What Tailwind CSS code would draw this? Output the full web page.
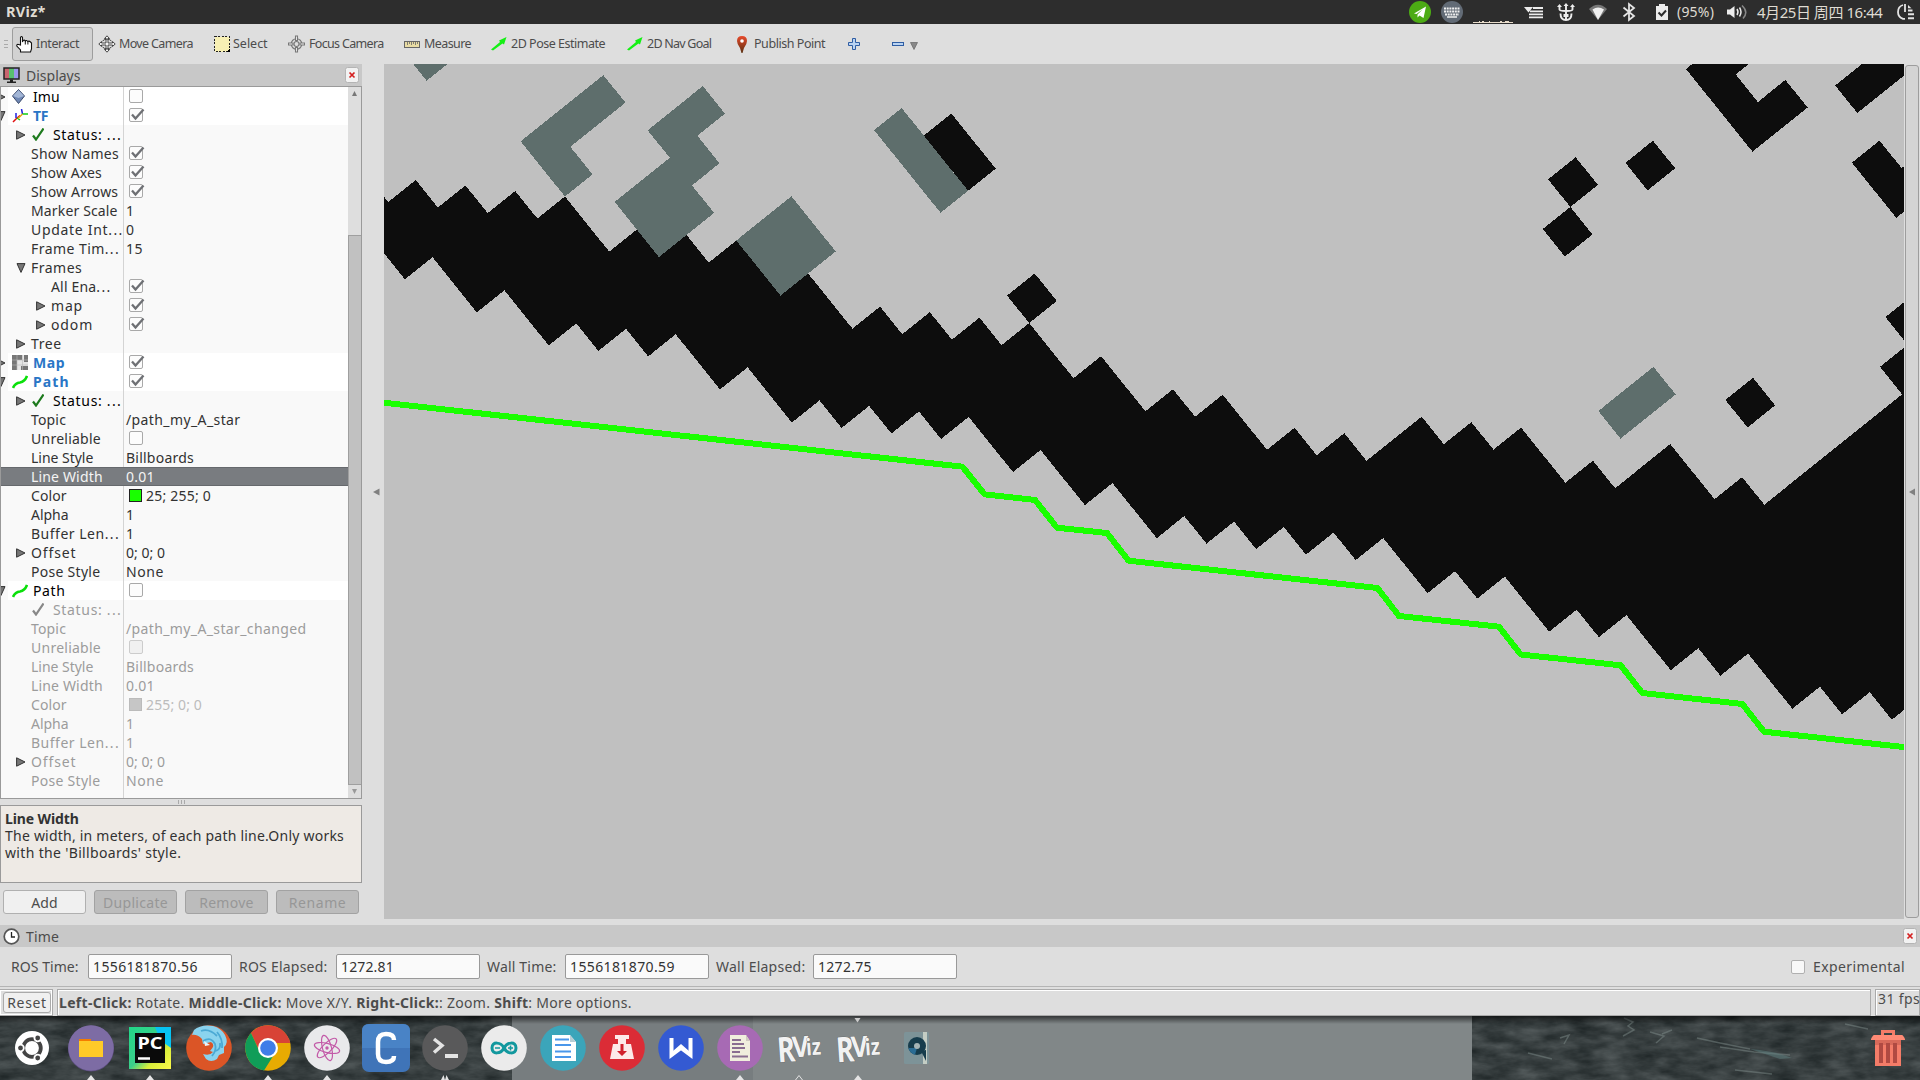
<!DOCTYPE html>
<html lang="zh">
<head>
<meta charset="utf-8">
<title>RViz*</title>
<script src="https://cdn.jsdelivr.net/npm/@tailwindcss/browser@4"></script>
</head>
<body class="w-[1920px] h-[1080px] overflow-hidden bg-[#dedede] font-['Noto_Sans','Noto_Sans_CJK_SC',sans-serif] text-[14px] text-[#4c4c4c] flex flex-col whitespace-nowrap">

<!-- top panel -->
<header class="h-6 shrink-0 bg-[#2d2d2d] text-[#dfdbd2] flex items-center pl-1.5">
  <span data-w="41" class="font-bold text-[14.5px]">RViz*</span>
  <svg class="ml-auto shrink-0" width="268" height="24" viewBox="1408 0 268 24">
    <circle cx="1420" cy="12" r="11" fill="#4cab14"/>
    <path d="M1414 13.500L1426 6.500L1423.500 18L1419.500 15.500L1417.500 17.500V14.500L1422.500 9.500L1416.500 14Z" fill="#fff"/>
    <circle cx="1452" cy="12" r="11" fill="#626b76"/>
    <path d="M1444 8.500H1460M1444 11.500H1460M1445 14.500H1459" stroke="#f0f0f0" stroke-width="2" stroke-dasharray="2 .7"/>
    <path d="M1447 17H1457" stroke="#f0f0f0" stroke-width="1.500"/>
    <path d="M1473 22.500H1513" stroke="#e8dccb"/><path d="M1479 21.500h1M1482 21.500h2M1489 21.500h1M1500 21.500h2M1505 21.500h4" stroke="#e8dccb"/>
    <path d="M1524 7H1533L1528.500 12.500Z" fill="#ececec"/>
    <path d="M1533 8H1543M1530 11.300H1543M1529 14.300H1543M1529 17.300H1543" stroke="#ececec" stroke-width="1.800"/>
    <path d="M1566 5V19M1559.500 6V9.500Q1559.500 11 1566 11Q1572.500 11 1572.500 9.500V6M1560.500 13.500Q1560.500 20 1566 20Q1571.500 20 1571.500 13.500" fill="none" stroke="#ececec" stroke-width="1.900"/>
    <path d="M1563.500 6L1566 3L1568.500 6ZM1557 7L1559.500 4L1562 7ZM1570 7L1572.500 4L1575 7Z" fill="#ececec"/><path d="M1563.500 14h5v3h-5z" fill="#ececec"/>
    <path d="M1589 9Q1598 .500 1607 9L1598 20Z" fill="#777"/><path d="M1592.500 9.500Q1598 5.500 1604 9.500L1598 20Z" fill="#f0f0f0"/>
    <path d="M1623.500 7.500L1634 16L1629 20V4L1634 8L1623.500 16.500" fill="none" stroke="#e4e4e4" stroke-width="1.800"/>
    <path d="M1656 6H1659V4H1665V6H1668V20H1656Z" fill="#ececec"/><path d="M1658.500 12.500L1661.500 15.500L1666 10.500" fill="none" stroke="#2d2d2d" stroke-width="2"/>
  </svg>
  <span data-w="41" class="ml-px w-12 shrink-0 pb-px">(95%)</span>
  <svg class="ml-px mr-[10px] shrink-0" width="22" height="24" viewBox="1725 0 22 24"><path d="M1726 9.500H1729L1733.500 6V18L1729 14.500H1726Z" fill="#ececec"/><path d="M1736 9Q1738 12 1736 15M1738.500 7.500Q1741.500 12 1738.500 16.500" fill="none" stroke="#ececec" stroke-width="1.500"/><path d="M1741 5.500Q1748 12 1742 18.500" fill="none" stroke="#888" stroke-width="1.500"/></svg>
  <span data-w="126" class="-ml-px mr-px w-[138px] shrink-0 text-[15px]">4月25日 周四 16:44</span>
  <svg class="shrink-0 mr-[3px]" width="21" height="24" viewBox="1895 0 21 24"><path d="M1902 5Q1897 6.500 1897 12Q1897 17 1902 18.800H1904" fill="none" stroke="#e4e4e4" stroke-width="1.800"/><path d="M1904 4V12" stroke="#e4e4e4" stroke-width="1.800"/><path d="M1907 5V8.200L1910.500 8.200Z" fill="#e4e4e4"/><path d="M1907 10.500H1911.500M1907 14.200H1913M1907 18.200H1913" stroke="#e4e4e4" stroke-width="2"/></svg>
</header>

<!-- toolbar -->
<nav class="h-10 shrink-0 flex items-center text-[12.500px] pl-1 text-[#4c4c4c]">
  <div class="w-1 mr-1 h-2 border-y border-[#aaa] flex items-center"><i class="h-px w-full bg-[#aaa]"></i></div>
  <div class="w-[81px] h-[34px] rounded-[3px] border border-[#9d9d9d] bg-[#d2d2d2] flex items-center pl-[3px]">
    <svg width="17" height="18" viewBox="0 0 17 18"><path d="M4.500 10V2.500Q5.500 .500 6.500 2.500V7L7 5.500Q8.500 4.500 9.300 6Q10.500 4.800 11.800 6.500Q13 5.500 14.500 7L15.500 8V14L14.500 17H4.500V15L.800 11Q.500 9 2.500 9.500Z" fill="#fff" stroke="#111" stroke-width="1.100"/><path d="M9.300 6V9.500M11.900 6.500V9.500" stroke="#111"/></svg>
    <span data-w="46" class="ml-[3px]">Interact</span>
  </div>
  <svg class="ml-[5px]" width="18" height="18" viewBox="0 0 18 18" fill="#f4f4f4" stroke="#333" stroke-width=".9"><path d="M9 .800L11.500 3.500H10V8H14.500V6.500L17.200 9L14.500 11.500V10H10V14.500H11.500L9 17.200L6.500 14.500H8V10H3.500V11.500L.800 9L3.500 6.500V8H8V3.500H6.500Z"/><path d="M4.500 6Q9 2 13.500 6M4.500 12Q9 16 13.500 12" fill="none"/></svg>
  <span data-w="84" class="ml-[3px] w-[95px]">Move Camera</span>
  <svg width="16" height="16" viewBox="0 0 16 16" shape-rendering="crispEdges"><rect x=".5" y=".5" width="15" height="15" fill="#f8f0b4" stroke="#222" stroke-dasharray="2 1.500"/><path d="M12 16L16 12V16Z"/></svg>
  <span data-w="39" class="ml-[3px] w-[55px]">Select</span>
  <svg width="17" height="18" viewBox="0 0 17 18" fill="none" stroke="#777" stroke-width="1.100"><circle cx="8.500" cy="9" r="5.300"/><circle cx="8.500" cy="9" r="2.500"/><path d="M7.500 1H9.500V5.500H7.500ZM7.500 12.500H9.500V17H7.500ZM.500 8H5V10H.500ZM12 8H16.500V10H12Z" fill="#eee"/></svg>
  <span data-w="84" class="ml-1 w-[95px]">Focus Camera</span>
  <svg width="16" height="7" viewBox="0 0 16 7"><rect x=".5" y=".5" width="15" height="6" fill="#e9dca4" stroke="#666"/><path d="M3.500 1V4M5.500 1V3M7.500 1V4M9.500 1V3M11.500 1V4M13.500 1V3" stroke="#666" stroke-width=".8"/></svg>
  <span data-w="51" class="ml-1 w-[67px]">Measure</span>
  <svg width="16" height="14" viewBox="0 0 16 14"><path d="M0 12.500L9 5L8 3.500L15.500 0L13 7.500L11.500 6.500L2 13.500Z" fill="#14f014"/></svg>
  <span data-w="106" class="ml-1 w-[116px]">2D Pose Estimate</span>
  <svg width="16" height="14" viewBox="0 0 16 14"><path d="M0 12.500L9 5L8 3.500L15.500 0L13 7.500L11.500 6.500L2 13.500Z" fill="#14f014"/></svg>
  <span data-w="77" class="ml-1 w-[90px]">2D Nav Goal</span>
  <svg width="10" height="17" viewBox="0 0 10 17"><defs><linearGradient id="pin" x2="0" y2="1"><stop stop-color="#e84a2c"/><stop offset="1" stop-color="#5a3010"/></linearGradient></defs><path d="M5 0Q10 0 10 5Q10 8 7 12L5.500 17H4.500L3 12Q0 8 0 5Q0 0 5 0Z" fill="url(#pin)"/><circle cx="5" cy="5" r="1.800" fill="#fff"/></svg>
  <span data-w="80" class="ml-[7px] w-[94px]">Publish Point</span>
  <svg width="12" height="12" viewBox="0 0 12 12"><path d="M4.500 .500H7.500V4.500H11.500V7.500H7.500V11.500H4.500V7.500H.500V4.500H4.500Z" fill="#b9d3f2" stroke="#2f5da3"/></svg>
  <svg class="ml-8" width="12" height="4" viewBox="0 0 12 4"><rect x=".5" y=".5" width="11" height="3" fill="#b9d3f2" stroke="#2f5da3"/></svg>
  <svg class="ml-1.5 mt-1" width="8" height="8" viewBox="0 0 8 8"><path d="M.500 .500H7.500L4 7.500Z" fill="#888" stroke="#666" stroke-width=".7"/></svg>
</nav>

<main class="h-[861px] shrink-0 flex">
  <!-- Displays panel -->
  <aside class="w-[362px] shrink-0 flex flex-col">
    <div class="h-[22px] bg-[#c8c8c8] flex items-center pl-[3px] pr-[3px]">
      <svg width="17" height="17" viewBox="0 0 17 17"><rect x="1" y="1" width="15" height="11" fill="#58c070"/><path d="M1 1H6V12H1Z" fill="#c8646e"/><path d="M11 1H16V12H11Z" fill="#9a96ec"/><rect x="1" y="1" width="15" height="11" fill="none" stroke="#222" stroke-width="1.500"/><path d="M7 12.500H10V14.500H13V16H4V14.500H7Z" fill="#222"/></svg>
      <span data-w="56" class="ml-1.5">Displays</span>
      <svg class="ml-auto" width="14" height="16" viewBox="0 0 14 16"><rect x=".5" y=".5" width="13" height="15" rx="2" fill="#f2f2f2" stroke="#b4b4b4"/><path d="M4.500 5.500L9.500 10.500M9.500 5.500L4.500 10.500" stroke="#d42020" stroke-width="1.700"/></svg>
    </div>
    <div class="h-[713px] border border-[#9a9a9a] bg-[#f9f9f9] flex">
      <div id="tree" class="relative w-[347px] shrink-0 text-[#323232] overflow-hidden"></div>
      <div class="flex-1 bg-[#dedede] flex flex-col">
        <div class="h-[148px] flex justify-center pt-1"><svg width="5" height="5" viewBox="0 0 5 5"><path d="M0 5L2.500 0L5 5Z" fill="#777"/></svg></div>
        <div class="h-[550px] border border-r-0 border-[#9f9f9f] bg-[#c1c1c1]"></div>
        <div class="flex-1 flex justify-center items-center"><svg width="5" height="5" viewBox="0 0 5 5"><path d="M0 0H5L2.500 5Z" fill="#999"/></svg></div>
      </div>
    </div>
    <div class="h-1.5 flex justify-center items-center gap-0.5"><i class="w-px h-1 bg-[#aaa]"></i><i class="w-px h-1 bg-[#aaa]"></i><i class="w-px h-1 bg-[#aaa]"></i></div>
    <div class="h-[78px] border border-[#9a9a9a] bg-[#eeeae5] pl-1 pt-1 leading-[17px] text-[#323232]">
      <p><b data-w="77">Line Width</b></p>
      <p><span data-w="337">The width, in meters, of each path line.Only works</span></p>
      <p><span data-w="176">with the 'Billboards' style.</span></p>
    </div>
    <div class="flex gap-2 pt-[7px] pl-[3px] leading-[23px] text-center">
      <div class="w-[83px] h-6 rounded-[3px] border border-[#b0b0b0] bg-[#f0f0f0]"><span data-w="28">Add</span></div>
      <div class="w-[83px] h-6 rounded-[3px] border border-[#a2a2a2] bg-[#bcbcbc] text-[#979797]"><span data-w="65">Duplicate</span></div>
      <div class="w-[83px] h-6 rounded-[3px] border border-[#a2a2a2] bg-[#bcbcbc] text-[#979797]"><span data-w="55">Remove</span></div>
      <div class="w-[83px] h-6 rounded-[3px] border border-[#a2a2a2] bg-[#bcbcbc] text-[#979797]"><span data-w="56">Rename</span></div>
    </div>
  </aside>
  <div class="w-[22px] h-[855px] shrink-0 flex items-center justify-center pl-[7px]"><svg width="7" height="8" viewBox="0 0 7 8"><path d="M0 4L6.500 .500V7.500Z" fill="#808080"/></svg></div>

  <!-- 3D view: the map's cells are drawn on the rotated grid, one unit per cell -->
  <svg class="bg-[#c0c0c0] shrink-0" width="1520" height="855" viewBox="384 64 1520 855" shape-rendering="crispEdges">
    <g transform="matrix(22.157 27.568 27.57 -22.08 1764.3 504.7)">
      <path fill="#0d0d0d" d="M-36-25H-31v1h1v1h1v1h1v1h2v1h1v1h1v1h2v1h2v1h1v1h1v1h1v1h2v1h2v1h1v1h2v1h1v1h1v2h1v1h1v1h2v1h1v2h2v1h1v5h-1v1H7V-1H6V-2H5V-3H3V-4H2V-5H0V-6H-1V-7H-3V-8H-4V-9H-6V-10H-7V-11H-8V-12H-9V-13H-10V-14H-12V-15H-14V-16H-16V-17H-17V-18H-18V-19H-19V-20H-21V-21H-23V-22H-24V-23H-25V-24H-27V-25H-29V-26H-36Z"/>
      <path fill="#0d0d0d" d="M-18-13h1v1h-1zM-10 3h1v1h-1zM-11 1h1v1h-1zM-10 0h1v1h-1zM-3 1h1v1h-1zM-11 6h3v2h-1v-1h-1v2h-1zM-8 9h1v4h-1zM-6 8h2v3h-1v-2h-1zM-2 6h1v1h-1zM-23-12h2v1h-2z"/>
      <path fill="#5e6e6c" d="M-24-13h3v1h-3zM-24-18h2v2h-2zM-27-20h2v2h-1v1h-1v1h-1v-2h1zM-30-21h2v1h-1v2h-1zM-34-22h1v1h-1zM-5-2h1v2h-1z"/>
    </g>
    <path fill="none" stroke="#19ff00" stroke-width="6" stroke-linejoin="round" d="M380 402.300L962.500 466.700L984.500 494.300L1035 500L1057 527.700L1107 533L1128.600 560.700L1377.500 588L1399 616L1499 626.700L1520.800 654.500L1620.700 665.300L1642.300 693L1742.300 704L1764 731.700L1908 747.500"/>
  </svg>
  <div class="w-4 shrink-0 pl-px pt-px"><div class="w-[14px] h-[853px] rounded-[3px] border border-[#9d9d9d] bg-[#d4d4d4] flex items-center justify-center"><svg width="6" height="8" viewBox="0 0 6 8"><path d="M0 4L6 .500V7.500Z" fill="#808080"/></svg></div></div>
</main>

<!-- Time panel -->
<section class="shrink-0 h-16">
  <div class="h-[22px] bg-[#c8c8c8] flex items-center pl-[3px] pr-[3px]">
    <svg width="17" height="17" viewBox="0 0 17 17"><circle cx="8.500" cy="8.500" r="7.300" fill="#fff" stroke="#555" stroke-width="1.700"/><path d="M8.500 4V9H12" fill="none" stroke="#222" stroke-width="1.300"/></svg>
    <span data-w="34" class="ml-1.5 mt-px">Time</span>
    <svg class="ml-auto" width="14" height="16" viewBox="0 0 14 16"><rect x=".5" y=".5" width="13" height="15" rx="2" fill="#f2f2f2" stroke="#b4b4b4"/><path d="M4.500 5.500L9.500 10.500M9.500 5.500L4.500 10.500" stroke="#d42020" stroke-width="1.700"/></svg>
  </div>
  <div class="h-[40px] border-b border-[#b4b4b4] flex items-center pl-[11px] pr-[15px]">
    <span class="w-[77px]"><span data-w="73">ROS Time:</span></span>
    <div class="w-36 h-[25px] rounded-[2px] border border-[#999] bg-[#fafafa] text-[#323232] pl-1 leading-[23px]"><span data-w="105">1556181870.56</span></div>
    <span class="w-[104px] pl-[7px]"><span data-w="93">ROS Elapsed:</span></span>
    <div class="w-36 h-[25px] rounded-[2px] border border-[#999] bg-[#fafafa] text-[#323232] pl-1 leading-[23px]"><span data-w="53">1272.81</span></div>
    <span class="w-[85px] pl-[7px]"><span data-w="73">Wall Time:</span></span>
    <div class="w-36 h-[25px] rounded-[2px] border border-[#999] bg-[#fafafa] text-[#323232] pl-1 leading-[23px]"><span data-w="105">1556181870.59</span></div>
    <span class="w-[104px] pl-[7px]"><span data-w="92">Wall Elapsed:</span></span>
    <div class="w-36 h-[25px] rounded-[2px] border border-[#999] bg-[#fafafa] text-[#323232] pl-1 leading-[23px]"><span data-w="54">1272.75</span></div>
    <i class="ml-auto w-[14px] h-[14px] rounded-[2px] border border-[#b0b0b0] bg-[#f8f8f8]"></i>
    <span class="w-[100px] pl-2"><span data-w="91">Experimental</span></span>
  </div>
</section>

<!-- status bar -->
<footer class="shrink-0 h-[27px] flex gap-1">
  <div class="w-[53px] border border-[#aaa] border-l-0 p-px bg-white"><div class="h-full bg-[#dedede] pl-0.5 pt-px"><div class="h-[21px] rounded-[3px] border border-[#aaa] bg-[#f0f0f0] text-center leading-[20px]"><span data-w="39">Reset</span></div></div></div>
  <div class="w-[1814px] border border-[#aaa] bg-white pl-px pt-px"><div class="h-full bg-[#dedede] leading-[23px]"><span data-w="601"><b>Left-Click:</b> Rotate. <b>Middle-Click:</b> Move X/Y. <b>Right-Click:</b>: Zoom. <b>Shift</b>: More options.</span></div></div>
  <div class="w-[45px] border border-[#aaa] bg-white pl-px pt-px"><div class="h-full bg-[#dedede] pl-px leading-[16px]"><span data-w="42">31 fps</span></div></div>
</footer>

<!-- dock -->
<div class="relative h-16 shrink-0">
  <svg class="absolute inset-0" width="1920" height="64">
    <defs>
      <filter id="water" x="0" y="0" width="100%" height="100%" color-interpolation-filters="sRGB"><feTurbulence type="fractalNoise" baseFrequency=".035 .09" numOctaves="4" seed="8"/><feColorMatrix values=".26 0 0 0 .09  .26 0 0 0 .118  .26 0 0 0 .122  0 0 0 0 1"/></filter>
      <linearGradient id="shade" x2="0" y2="1"><stop stop-color="#000" stop-opacity=".6"/><stop offset="1" stop-color="#000" stop-opacity="0"/></linearGradient>
    </defs>
    <rect width="1920" height="64" filter="url(#water)"/>
    <g fill="none" stroke="#8d9a98" stroke-opacity=".4" stroke-width="1.500"><path d="M1624 2L1633 6L1628 10L1634 14L1623 20M1650 16L1664 20L1656 27M1662 18L1672 14M1697 22L1720 27L1750 33M1720 31L1754 36L1790 39M1845 8L1868 13M1560 22L1569 19L1564 28M1735 54L1772 58M1528 37L1552 43"/></g>
    <path d="M1750 33Q1775 35 1792 42L1780 43Z" fill="#5d8080" opacity=".5"/>
    <rect x="512" width="241" height="64" fill="#777d7f"/><rect x="753" width="719" height="64" fill="#818788"/>
    <rect width="1920" height="8" fill="url(#shade)"/>
    <path d="M854.500 2H860.500L857.500 6.500Z" fill="#ccc"/>
    <path d="M87 64L91 59L95 64ZM146 64L150 59L154 64ZM264 64L268 59L272 64ZM323 64L327 59L331 64ZM441 64L443.500 59L445 64L446.500 59L449 64ZM736 64L740 59L744 64ZM854 64L858 59L862 64Z" fill="#e4e4e4"/><path d="M795.500 64L799 59.500L802.500 64" fill="none" stroke="#e4e4e4"/>
  </svg>
  <div class="relative flex h-16 pl-[3px] pt-[3px]">
    <svg class="w-[59px] h-[58px]" viewBox="-29 -29 59 58"><circle r="17" fill="#fff"/><circle r="8.800" fill="none" stroke="#444" stroke-width="3.800"/><g stroke="#fff" stroke-width="1.800" fill="#444"><circle cx="-11.500" r="3.300"/><circle cx="5.700" cy="-10" r="3.300"/><circle cx="5.700" cy="10" r="3.300"/></g></svg>
    <svg class="w-[59px] h-[58px]" viewBox="-29 -29 59 58"><circle r="23" cy=".6" fill="#5a4c7c"/><circle r="22.700" fill="#7d6ca4"/><path d="M-12-9H0V-4H-12Z" fill="#f57c00"/><path d="M-12-7H1L2-7H12V9H-12Z" fill="#ffca28"/></svg>
    <svg class="w-[59px] h-[58px]" viewBox="-29 -29 59 58"><defs><linearGradient id="pc" x2="1" y2="1"><stop stop-color="#21d789"/><stop offset=".5" stop-color="#3ccf8a"/><stop offset=".7" stop-color="#d8ee3a"/><stop offset="1" stop-color="#fcf84a"/></linearGradient></defs><rect x="-21" y="-21" width="42" height="42" fill="url(#pc)"/><path d="M5-21H21V0L10-8Z" fill="#07c3f2"/><rect x="-15" y="-15" width="30" height="30" fill="#0a0a0a"/><text x="-12.500" y="1" font-size="16" font-weight="700" fill="#fff" textLength="25" lengthAdjust="spacingAndGlyphs">PC</text><path d="M-12 10.500H0" stroke="#fff" stroke-width="2.500"/></svg>
    <svg class="w-[59px] h-[58px]" viewBox="-29 -29 59 58"><circle r="22.800" fill="#db5526"/><path d="M-17-13L-15-18Q-8-24 4-22Q12-20 16-13Q20-5 15-1L15 5L10 7L8 11Q2 15-3 11L-6 6Q1 8 4 4L1 3Q7-3 2-6L-6-4L-7-9Q-12-14-17-13Z" fill="#8ad3ee"/><path d="M-6-7Q2-12 6-4Q8 2 3 8M8-16Q14-9 13 0M-8-17Q0-20 8-12M6 3Q12 2 11-5" fill="none" stroke="#4ba9d4" stroke-width="1.800"/><path d="M-5-7L1-3L-4-2Z" fill="#e9f6fc"/></svg>
    <svg class="w-[59px] h-[58px]" viewBox="-29 -29 59 58"><circle r="22.800" fill="#e8ab02"/><path d="M0-5H22.300A22.800 22.800 0 0 0-17-15L-8 4Z" fill="#d84336"/><path d="M-17-15A22.800 22.800 0 0 0-4 22.500L7 5L-8 4.500Z" fill="#109d58"/><circle r="10" fill="#fff"/><circle r="7.800" fill="#3f7de8"/></svg>
    <svg class="w-[59px] h-[58px]" viewBox="-29 -29 59 58"><circle r="22.800" fill="#e9e9eb"/><g fill="none" stroke="#c35aa8" stroke-width="1.200"><ellipse rx="4.500" ry="13" transform="rotate(-15)"/><ellipse rx="4.500" ry="13" transform="rotate(45)"/><ellipse rx="4.500" ry="13" transform="rotate(105)"/></g><circle r="1.700" fill="#c35aa8"/></svg>
    <svg class="w-[59px] h-[58px]" viewBox="-29 -29 59 58"><rect x="-24" y="-24" width="48" height="48" rx="7" fill="#3f74b8"/><path d="M-24 0V-17Q-24-24-17-24H17Q24-24 24-17V0Z" fill="#4983c6"/><path d="M8-8Q8-14 0-14Q-8-14-8-6V6Q-8 14 0 14Q8 14 8 8" fill="none" stroke="#fff" stroke-width="4.500"/></svg>
    <svg class="w-[59px] h-[58px]" viewBox="-29 -29 59 58"><circle r="22.800" fill="#59595a"/><path d="M-11-9L-3-2.500L-11 4.500" fill="none" stroke="#e4e4e4" stroke-width="3.500"/><path d="M0 8H13" stroke="#e4e4e4" stroke-width="4"/></svg>
    <svg class="w-[59px] h-[58px]" viewBox="-29 -29 59 58"><circle r="22.800" fill="#ebebeb"/><path d="M0 0C-3-6-12-7-12 0S-3 6 0 0S12-7 12 0S3 6 0 0Z" fill="none" stroke="#12989e" stroke-width="3"/><path d="M-9 0H-4M4 0H9M6.500-2.500V2.500" stroke="#12989e" stroke-width="1.600"/></svg>
    <svg class="w-[59px] h-[58px]" viewBox="-29 -29 59 58"><circle r="22.800" fill="#3ba5ba"/><path d="M-11-13H7L13-6V13H-11Z" fill="#fff"/><path d="M7-13L13-6H7Z" fill="#b8cdd4"/><path d="M-8-8.500H6M-8-3H8M-8 3.500H8M-8 9H8" stroke="#4a97ea" stroke-width="2"/></svg>
    <svg class="w-[59px] h-[58px]" viewBox="-29 -29 59 58"><circle r="22.800" fill="#db2c36"/><path d="M-7-13H7V-9H4V-4H9L12 11H-12L-9-4H-4V-9H-7Z" fill="#fde9e9"/><path d="M-1.500-4H1.500V3H5L0 8L-5 3H-1.500Z" fill="#d1202c"/></svg>
    <svg class="w-[59px] h-[58px]" viewBox="-29 -29 59 58"><circle r="22.800" fill="#345ad2"/><path d="M-9.500-10V7L0 0L9.500 7V-10" fill="none" stroke="#fff" stroke-width="4"/><path d="M-11 10L0 0L11 10L8 3L0-4L-8 3Z" fill="#fff"/></svg>
    <svg class="w-[59px] h-[58px]" viewBox="-29 -29 59 58"><circle r="22.800" fill="#a76ab4"/><path d="M-10-13H6L10-7V13H-10Z" fill="#f0eedd"/><path d="M6-13L10-7H6Z" fill="#cfc8c0"/><path d="M-8-8H1M-8-4H4M-8 0H5M-8 4H0M-8 8.500H8" stroke="#8a6e91" stroke-width="1.900"/></svg>
    <svg class="w-[59px] h-[58px]" viewBox="-29 -29 59 58" font-weight="700" font-family="Open Sans, sans-serif" stroke="#555" stroke-width=".6" paint-order="stroke" fill="#f2f2f2"><g transform="rotate(-4)"><text x="-22" y="13" font-size="35" textLength="18" lengthAdjust="spacingAndGlyphs">R</text><text x="-7" y="9" font-size="29" textLength="17" lengthAdjust="spacingAndGlyphs">V</text><text x="7" y="8" font-size="23" textLength="15" lengthAdjust="spacingAndGlyphs">iz</text></g></svg>
    <svg class="w-[59px] h-[58px]" viewBox="-29 -29 59 58" font-weight="700" font-family="Open Sans, sans-serif" stroke="#555" stroke-width=".6" paint-order="stroke" fill="#f2f2f2"><g transform="rotate(-4)"><text x="-22" y="13" font-size="35" textLength="18" lengthAdjust="spacingAndGlyphs">R</text><text x="-7" y="9" font-size="29" textLength="17" lengthAdjust="spacingAndGlyphs">V</text><text x="7" y="8" font-size="23" textLength="15" lengthAdjust="spacingAndGlyphs">iz</text></g></svg>
    <svg class="w-[59px] h-[58px]" viewBox="-29 -29 59 58"><rect x="-13" y="-16" width="25" height="32" rx="1.500" fill="#7d9398"/><path d="M6-16H10V16H6Z" fill="#c4cdc4"/><circle r="9" cy="-2" fill="#163c4c"/><path d="M4 3L9 2L9 13Z" fill="#163c4c"/><path d="M-8.500 0A9 9 0 0 0-2 6.700L0 0Z" fill="#2a6c94"/><circle r="3" cy="-2" fill="#a4b4b6"/></svg>
    <svg class="ml-auto mr-[2px] w-[59px] h-[58px]" viewBox="-29 -29 59 58"><path d="M-7-12V-18H7V-12H4V-15H-4V-12Z" fill="#f47c68"/><path d="M-17-9Q-15-13-14-13H14Q15-13 17-9V-8H-17Z" fill="#ff8a75"/><path d="M-13-8H13V18H-13Z" fill="#f47c68"/><path d="M-13-8H13V-3H-13Z" fill="#d86a5a"/><path d="M-9-5H-5V15H-9ZM-2-5H2V15H-2ZM5-5H9V15H5Z" fill="#b04a42"/></svg>
  </div>
</div>

<script>
const TRI_R = '<svg width="10" height="10" viewBox="0 0 10 10"><path d="M.600 .800L9 5L.600 9.200Z" fill="#777" stroke="#333"/></svg>';
const TRI_D = '<svg width="10" height="10" viewBox="0 0 10 10"><path d="M1 .600H9L5 9.400Z" fill="#777" stroke="#333"/></svg>';
const tick = c => `<svg width="12" height="13" viewBox="0 0 12 13"><path d="M1 7.500L4 11.500L11.500 .500" fill="none" stroke="${c}" stroke-width="2.200"/></svg>`;
const PATH = '<svg width="16" height="14" viewBox="0 0 16 14"><path d="M1 13Q3 8 8 7.500Q13 6.500 15 1" fill="none" stroke="#0be00b" stroke-width="2.600"/></svg>';
const ICONS = {
  imu: '<svg width="13" height="15" viewBox="0 0 13 15"><path d="M6.500 .500L12.500 7L6.500 14.500L.500 7Z" fill="#7088b4" stroke="#3b4a6b"/><path d="M6.500 1L12 7L6.500 9L1 7Z" fill="#a3b6d6"/></svg>',
  tf: '<svg width="16" height="14" viewBox="0 0 16 14" fill="none" stroke-width="1.500"><path d="M1 13L5 9L8 6.500" stroke="#e01010"/><path d="M4 4V9M9.500 0L10.500 5" stroke="#2020e0"/><path d="M5 9L8 11M10.500 5H16" stroke="#10d010"/><path d="M10.500 5L6 9.500" stroke="#e8a010"/></svg>',
  map: '<svg width="16" height="15" viewBox="0 0 16 15"><rect width="16" height="15" fill="#e6e6e6"/><path d="M0 0H10V5H5V15H0ZM12 0H16V7H12ZM9 11H16V15H9Z" fill="#777"/><path d="M0 5H16M0 10H16M5 0V15M10.500 0V15" stroke="#bbb" stroke-width=".6"/></svg>',
  path: PATH, ok: tick('#1d7a1d'), off: tick('#888')
};
// level, arrow (r/d/-), icon, name, name width, value, value width, style
const ROWS = [
  [0,'r','imu','Imu',26,'[ ]',0,'k'],[0,'d','tf','TF',18,'[x]',0,'b'],[1,'r','ok','Status: …',67,'',0,'k'],
  [1,'-','','Show Names',87.500,'[x]',0,''],[1,'-','','Show Axes',73.500,'[x]',0,''],[1,'-','','Show Arrows',89.500,'[x]',0,''],
  [1,'-','','Marker Scale',87.500,'1',0,''],[1,'-','','Update Int…',89,'0',0,''],[1,'-','','Frame Tim…',88,'15',17,''],
  [1,'d','','Frames',50,'',0,''],[2,'-','','All Ena…',63,'[x]',0,''],[2,'r','','map',30,'[x]',0,''],[2,'r','','odom',40,'[x]',0,''],
  [1,'r','','Tree',31,'',0,''],[0,'r','map','Map',31,'[x]',0,'b'],[0,'d','path','Path',33,'[x]',0,'b'],
  [1,'r','ok','Status: …',67,'',0,'k'],[1,'-','','Topic',37,'/path_my_A_star',117,''],[1,'-','','Unreliable',70,'[ ]',0,''],
  [1,'-','','Line Style',66,'Billboards',69,''],[1,'-','','Line Width',74,'0.01',29,'s'],[1,'-','','Color',37,'#25; 255; 0',67,''],
  [1,'-','','Alpha',39,'1',0,''],[1,'-','','Buffer Len…',89,'1',0,''],[1,'r','','Offset',45,'0; 0; 0',41,''],[1,'-','','Pose Style',70,'None',37,''],
  [0,'d','path','Path',31,'[ ]',0,'k'],[1,'-','off','Status: …',67,'',0,'g'],[1,'-','','Topic',37,'/path_my_A_star_changed',181,'g'],
  [1,'-','','Unreliable',70,'[ ]',0,'g'],[1,'-','','Line Style',66,'Billboards',69,'g'],[1,'-','','Line Width',74,'0.01',29,'g'],
  [1,'-','','Color',37,'#255; 0; 0',58,'g'],[1,'-','','Alpha',39,'1',0,'g'],[1,'-','','Buffer Len…',89,'1',0,'g'],
  [1,'r','','Offset',45,'0; 0; 0',41,'g'],[1,'-','','Pose Style',70,'None',37,'g']
];
const TONE = { '':'', k:'text-black', b:'font-bold text-[#2a76c6]', s:'text-[#f4f4f4] bg-[#797c80] border-y border-[#66696d] leading-[17px]', g:'text-[#9c9c9c]' };
const ARROW = ['-ml-[5px] w-3','ml-[15px] w-[15px]','ml-[35px] w-[15px]'];
document.getElementById('tree').innerHTML = ROWS.map(([lv, ar, ic, name, nw, val, vw, tone]) => {
  const arrow = `<span class="${ARROW[lv]} shrink-0">${ar === 'r' ? TRI_R : ar === 'd' ? TRI_D : ''}</span>`;
  const icon = ic ? `<span class="${lv ? 'w-[22px] pl-px' : 'w-[25px] pl-1'} shrink-0">${ICONS[ic]}</span>` : '';
  const label = name.replace('…', '<span class="tracking-[1.4px]">...</span>');
  let v = '';
  if (val === '[ ]' || val === '[x]')
    v = `<i class="ml-[5px] mb-px w-[14px] h-[14px] rounded-[2px] border ${tone === 'g' ? 'border-[#ccc] bg-[#f0f0f0]' : 'border-[#a9a9a9] bg-[#fcfcfc]'}">${val === '[x]' ? '<svg class="overflow-visible" width="12" height="12" viewBox="0 0 12 12"><path d="M2 5.500L5.500 9.500L13.500 .500" fill="none" stroke="#6e7074" stroke-width="2.300"/></svg>' : ''}</i>`;
  else if (val[0] === '#')
    v = `<i class="ml-[5px] mr-1 w-[13px] h-[13px] border ${tone === 'g' ? 'border-[#bbb] bg-[#c6c6c6]' : 'border-[#222] bg-[#19ff00]'}"></i><span class="${tone === 'g' ? 'text-[#bcbcbc]' : ''}" data-w="${vw}">${val.slice(1)}</span>`;
  else v = `<span class="ml-0.5" data-w="${vw}">${val}</span>`;
  return `<div class="h-[19px] flex leading-[19px] ${TONE[tone]}">
    <div class="w-[122px] shrink-0 flex items-center overflow-hidden ${lv ? '' : 'bg-linear-to-r from-[#f9f9f9] from-[7px] to-white to-[7px]'}">${arrow}${icon}<span data-w="${nw}">${label}</span></div>
    <div class="flex-1 border-l ${tone === 's' ? 'border-[#797c80]' : 'border-[#d4d4d4]'} flex items-center ${lv ? '' : 'bg-white'}">${v}</div></div>`;
}).join('') + '<div class="ml-[122px] h-2 border-l border-[#d4d4d4]"></div>';

// track each label to its intended width; repeated because glyph advances may round
document.querySelectorAll('[data-w]').forEach(el => {
  const want = +el.dataset.w;
  if (!want) return;
  const r = document.createRange();
  r.selectNodeContents(el);
  let ls = 0;
  for (let i = 0; i < 5; i++) {
    ls += (want - r.getBoundingClientRect().width) / el.textContent.length;
    el.style.letterSpacing = ls + 'px';
  }
});
</script>
</body>
</html>
